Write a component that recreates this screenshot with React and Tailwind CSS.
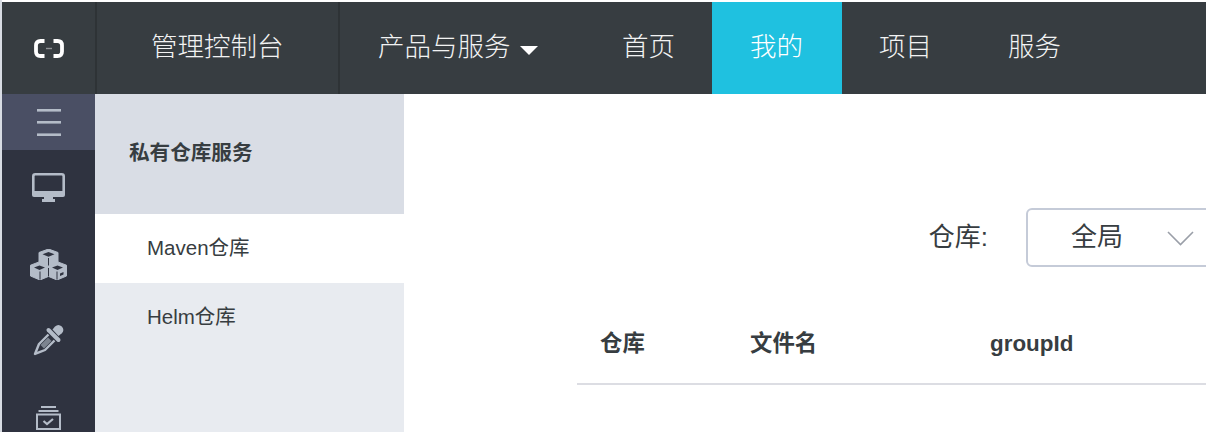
import React from "react";

const cjk = "font-['Liberation_Sans','Noto_Sans_CJK_SC',sans-serif]";

const Logo = () => (
  <svg width="30" height="19" viewBox="0 0 30 19" fill="none">
    <path d="M10.5 2H6.5Q2 2 2 6.5V12.5Q2 17 6.5 17H10.5" stroke="#fff" strokeWidth="3.8" />
    <path d="M19.5 2H23.5Q28 2 28 6.5V12.5Q28 17 23.5 17H19.5" stroke="#fff" strokeWidth="3.8" />
    <path d="M12 9.5H18" stroke="#8f9396" strokeWidth="1.4" />
  </svg>
);

const MenuIcon = () => (
  <svg width="24" height="27" viewBox="0 0 24 27" fill="#b4bcc8">
    <rect width="24" height="2.6" y="0" />
    <rect width="24" height="2.6" y="12" />
    <rect width="24" height="2.6" y="24.4" />
  </svg>
);

const MonitorIcon = () => (
  <svg width="33" height="29" viewBox="0 0 33 29">
    <rect x="1.3" y="1.3" width="30.4" height="20.4" rx="2" fill="none" stroke="#b4bcc8" strokeWidth="2.6" />
    <rect x="0" y="18" width="33" height="6" rx="2" fill="#b4bcc8" />
    <rect x="12" y="24" width="9" height="2.5" fill="#b4bcc8" />
    <rect x="10" y="26" width="13" height="3" fill="#b4bcc8" />
  </svg>
);

const CubesIcon = () => (
  <svg width="37" height="31" viewBox="0 0 37 31">
    <path d="M18.5 0 28 3.5V13l8.5 3.2V27L27 31l-8.5-3.6L10 31 .5 27V16.2L9 13V3.5z" fill="#b4bcc8" stroke="#b4bcc8" strokeLinejoin="round" />
    <path d="M18.5 3 24.5 5.3 18.5 7.8 12.5 5.3z" fill="#2f3340" />
    <path d="M9.5 16.5 15 18.6 9.5 21 4 18.6z" fill="#2f3340" />
    <path d="M27.5 16.5 33 18.6 27.5 21 22 18.6z" fill="#2f3340" />
    <path d="M18.5 9v7.5M18.5 19v8.4M10 22.5v8M27 22.5v8" stroke="#2f3340" strokeWidth="1" fill="none" />
    <path d="M30 24.5 33.5 23 33.5 25.5 30 27z" fill="#2f3340" />
  </svg>
);

const DropperIcon = () => (
  <svg width="31" height="32" viewBox="0 0 31 32" fill="none">
    <path d="M19.5 5.5 22 2.5a5 5 0 0 1 6.8 0 5 5 0 0 1 0 6.8L25.5 12z" fill="#b4bcc8" />
    <path d="M15.5 6 25.5 16" stroke="#b4bcc8" strokeWidth="4" strokeLinecap="round" />
    <path d="M15.5 10.5 6 20 3.8 25.5 2 30l4.5-1.8L12 26l9.5-9.5" stroke="#b4bcc8" strokeWidth="2.4" strokeLinejoin="round" />
    <path d="M15 13.5 18.5 17 11 24.5 7.5 21z" fill="#7d8490" />
  </svg>
);

const ArchiveIcon = () => (
  <svg width="25" height="24" viewBox="0 0 25 24" fill="none" stroke="#b4bcc8">
    <path d="M5 1h15" strokeWidth="2" />
    <path d="M2.5 5h20" strokeWidth="2" />
    <rect x="1" y="8.5" width="23" height="14.5" strokeWidth="2" />
    <path d="M7.5 15l3.5 3 6-5" strokeWidth="2.2" />
  </svg>
);

const navLinks = [
  { label: "首页", w: "w-[134px]", pl: "pl-[44px]" },
  { label: "我的", w: "w-[130px]", pl: "pl-[38px]", active: true },
  { label: "项目", w: "w-[129px]", pl: "pl-[37px]" },
  { label: "服务", w: "w-[129px]", pl: "pl-[37px]" },
];

export default function App() {
  return (
    <div className={`${cjk} w-[1206px] h-[432px] overflow-hidden bg-[#d8dce3] pl-[2px]`}>
      <div className="h-[2px] bg-white" />
      {/* Top bar */}
      <header className="flex h-[92px] bg-[#373d41] text-[26.5px] text-[#f2f3f3] font-light">
        <div className="w-[95px] border-r-2 border-[#2e3336] flex items-center justify-center">
          <Logo />
        </div>
        <div className="w-[243px] border-r-2 border-[#2e3336] flex items-center pl-[54px]">
          管理控制台
        </div>
        <div className="w-[238px] flex items-center pl-[38px]">
          产品与服务
          <span className="ml-[9px] mt-[4px] w-0 h-0 border-x-[9px] border-x-transparent border-t-[9px] border-t-white" />
        </div>
        {navLinks.map((n) => (
          <div
            key={n.label}
            className={`${n.w} ${n.pl} flex items-center ${n.active ? "bg-[#1fc1e0] text-white" : ""}`}
          >
            {n.label}
          </div>
        ))}
      </header>

      <div className="flex h-[338px] bg-white">
        {/* Icon rail */}
        <aside className="w-[93px] bg-[#2f3340] flex flex-col items-center">
          <div className="w-full h-[56px] bg-[#4a4f64] flex items-center justify-center">
            <MenuIcon />
          </div>
          <div className="mt-[23px]"><MonitorIcon /></div>
          <div className="mt-[47px]"><CubesIcon /></div>
          <div className="mt-[44px]"><DropperIcon /></div>
          <div className="mt-[50px]"><ArchiveIcon /></div>
        </aside>

        {/* Sub menu */}
        <nav className="w-[309px] bg-[#e8ebf0] text-[#373d41]">
          <div className="h-[120px] bg-[#d9dde5] flex items-center pl-[34px] pb-[2px] text-[20.6px] font-bold">
            私有仓库服务
          </div>
          <div className="h-[69px] bg-white flex items-center pl-[52px] text-[20.5px]">Maven仓库</div>
          <div className="h-[69px] flex items-center pl-[52px] text-[20.5px]">Helm仓库</div>
        </nav>

        {/* Content */}
        <main className="flex-1 pl-[173px] text-[#373d41]">
          <div className="flex items-center justify-end h-[172px] pt-[114px] -mr-[130px]">
            <span className="text-[26px] mr-[38px]">仓库:</span>
            <div className="w-[310px] h-[59px] shrink-0 border-2 border-[#c5cbd8] rounded-[6px] flex items-center pl-[43px] text-[26px]">
              全局
              <svg className="ml-[44px] mt-[2px]" width="27" height="15" viewBox="0 0 27 15" fill="none">
                <path d="M1 1l12.5 12.5L26 1" stroke="#9a9fa8" strokeWidth="1.6" />
              </svg>
            </div>
          </div>
          <div className="mt-[46px] h-[73px] border-b-2 border-[#dcdde3] flex items-center pb-[7px] pl-[23px] text-[22.4px] font-bold">
            <span className="w-[150px]">仓库</span>
            <span className="w-[240px]">文件名</span>
            <span>groupId</span>
          </div>
        </main>
      </div>
    </div>
  );
}
